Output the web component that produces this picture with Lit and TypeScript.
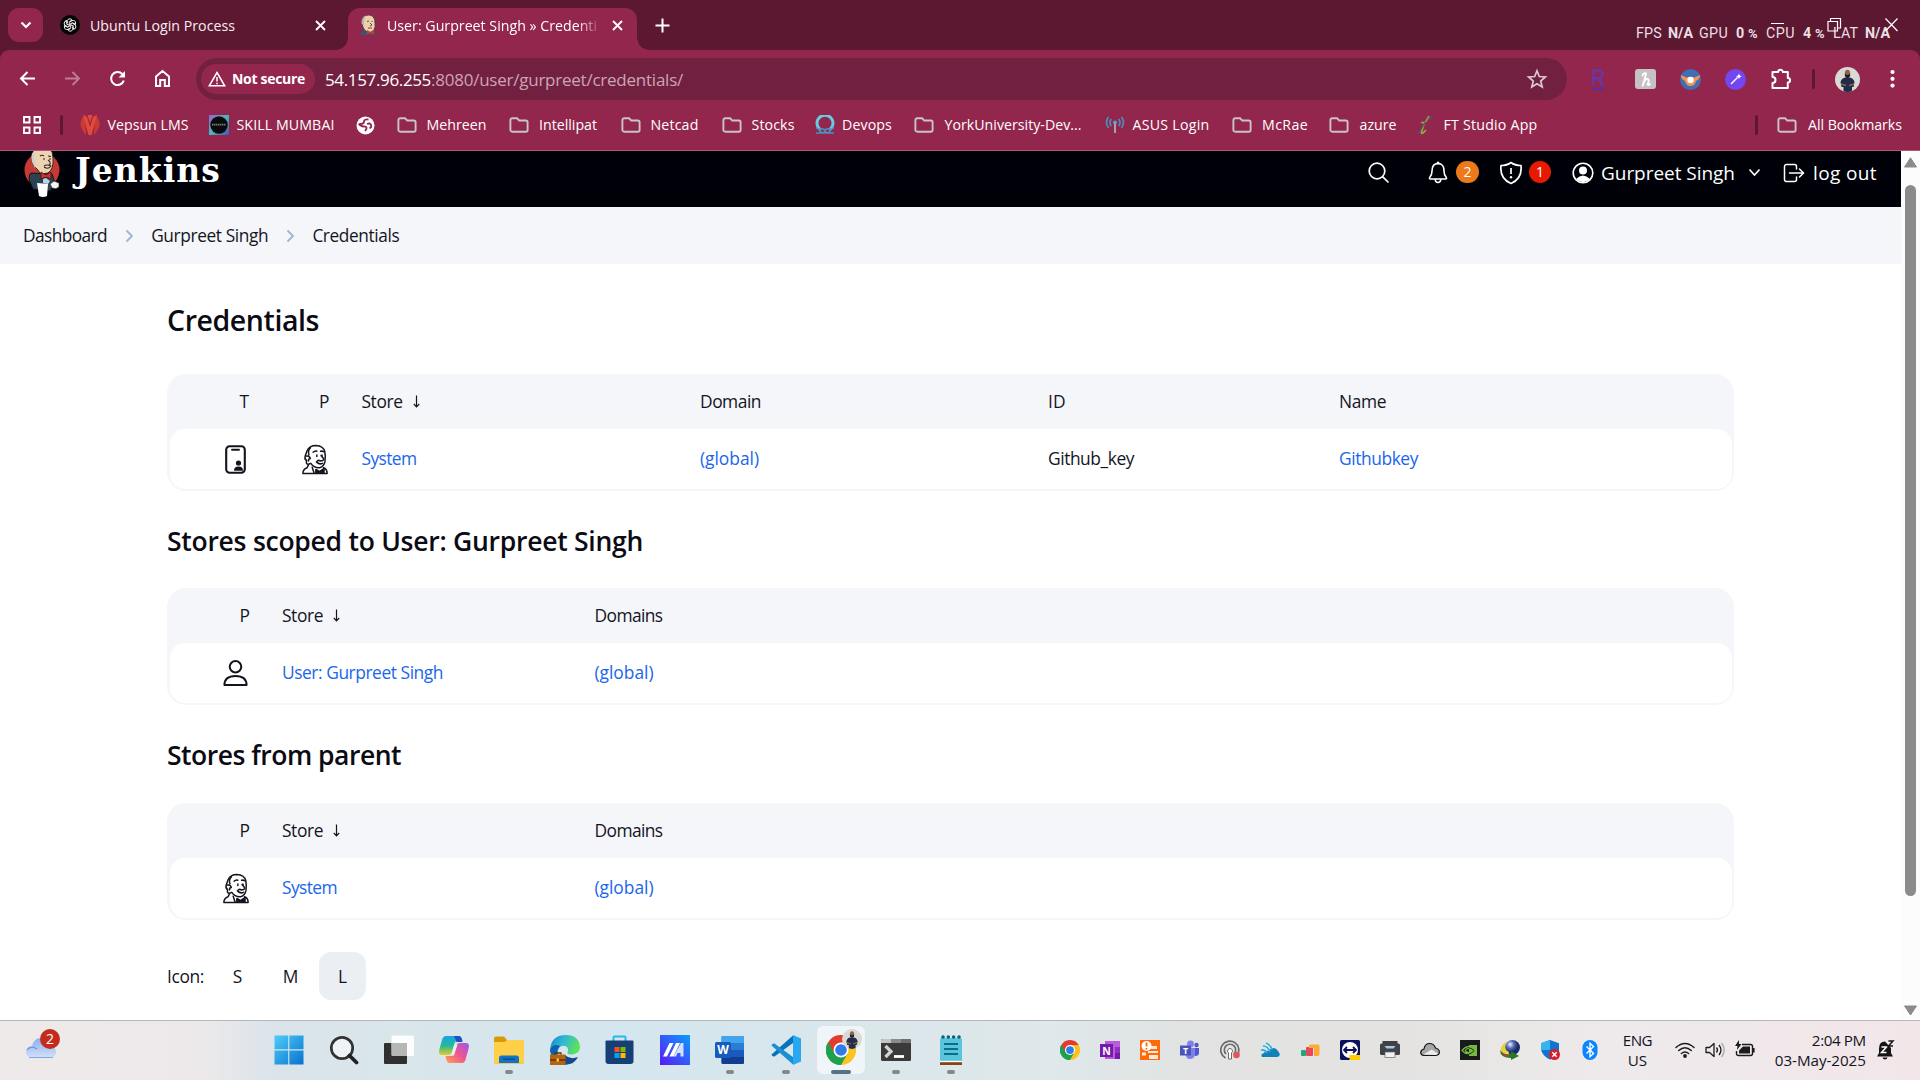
import { LitElement, html, css, svg, nothing } from "lit";
import { customElement } from "lit/decorators.js";

/** Text whose tracking is tuned so that it fills a given width. */
const fit = (text: string, w: number, cls = "") =>
  html`<span class="fit ${cls}" data-w=${w}>${text}</span>`;

const icon = (w: number, h: number, body: unknown, cls = "") =>
  html`<svg class="ic ${cls}" width=${w} height=${h} viewBox="0 0 ${w} ${h}">${body}</svg>`;

const folder = icon(20, 16, svg`<path d="M3.2 1.2H8l2.2 2.3h6.600a1.800 1.800 0 0 1 1.800 1.800v7.600a1.800 1.800 0 0 1-1.800 1.800H3.200a1.800 1.800 0 0 1-1.800-1.800V3a1.800 1.800 0 0 1 1.800-1.800z" fill="none" stroke="#c9c5c7" stroke-width="1.900"/>`);

const vepsun = icon(20, 20, svg`<path d="M5 0Q-1 5 1 12q2 5 5 8z" fill="#c93c34"/><path d="M15 0q6 5 4 12-2 5-5 8z" fill="#c93c34"/><path d="M3 0l5.500 20h3L17 0l-4 2-3 10L7 2z" fill="#e5493a"/><path d="M7.500 0h5L10 8z" fill="#e5493a"/>`);
const skill = icon(20, 20, svg`<defs><linearGradient id="sk" x1="0" y1="0" x2="1" y2="1"><stop offset="0" stop-color="#9b62d0"/><stop offset=".5" stop-color="#48b9b9"/><stop offset="1" stop-color="#4653b5"/></linearGradient></defs><rect width="20" height="20" fill="url(#sk)"/><circle cx="10" cy="10" r="8.700" fill="#080a0c"/><path d="M3 9.600h14" stroke="#777" stroke-width="1.800" stroke-dasharray="1.500 .5"/>`);
const globe = icon(19, 19, svg`<circle cx="9.500" cy="9.500" r="9" fill="#fff"/><path d="M12.500 3.500Q8 3 8 5.500T4.500 8 7 10.500q3-.5 3.500 1T9 15M11 8q3-1.500 4 1t-1.500 3" fill="none" stroke="#93264d" stroke-width="1.900"/>`);
const devops = icon(20, 20, svg`<path d="M5 14.500A8 8 0 1 1 15 14.500" fill="none" stroke="#68cbe0" stroke-width="3"/><path d="M1 13q3 0 4 3t4 1-1-3-2 3M19 13q-3 0-4 3t-4 1 1-3 2 3M1 18h18" fill="none" stroke="#4c8fc0" stroke-width="1.500"/>`);
const asus = icon(20, 20, svg`<g fill="none" stroke="#4d8dbd" stroke-width="1.700"><path d="M3.500 2q-4 5.500 0 11M16.500 2q4 5.500 0 11M6.300 4q-2.600 3.500 0 7M13.700 4q2.600 3.500 0 7"/></g><circle cx="10" cy="7.500" r="2" fill="#57a2d6"/><path d="M10 9v9" stroke="#b9a8b4" stroke-width="1.800"/>`);
const ftStudio = icon(18, 20, svg`<path d="M5 7.500h3.500L5.500 17q-.5 2 1.500 1l3-3" fill="none" stroke="#8fae3c" stroke-width="1.700"/><path d="M17 2Q12 3 9.500 7L2 19" fill="none" stroke="#5a4a80" stroke-width="1.300"/><path d="M13 1L9.500 7" stroke="#8f9a3a" stroke-width="1.600"/>`);

const chrome = (s: number) => html`<svg class="ic" width=${s} height=${s} viewBox="0 0 48 48">
  <path d="M24 24L3.200 12A24 24 0 0 1 44.800 12z" fill="#e33b2e"/>
  <path d="M24 24L3.200 12A24 24 0 0 0 24 48l10.400-18z" fill="#1fa04e"/>
  <path d="M24 24L24 48A24 24 0 0 0 44.800 12H24z" fill="#fcc31e"/>
  <path d="M3.200 12L13.600 30 24 24V13H44.800z" fill="#e33b2e"/><path d="M3.200 12L13.600 30 24 35 34.400 30 24 48A24 24 0 0 1 3.200 12z" fill="#1fa04e"/>
  <circle cx="24" cy="24" r="12" fill="#fff"/><circle cx="24" cy="24" r="9.300" fill="#2f7bea"/></svg>`;

const person = (s: number) => html`<svg class="ic" width=${s} height=${s} viewBox="0 0 25 25">
  <defs><clipPath id="pc"><circle cx="12.500" cy="12.500" r="12.500"/></clipPath></defs>
  <g clip-path="url(#pc)"><rect width="25" height="25" fill="#d9dad3"/><path d="M5.500 15q1-4 5-4.500h4q4 .5 5 4.500l-1 5H17v5H8.500v-5H6.500z" fill="#222b48"/>
  <path d="M6 17l5 1.500M19 17l-5 1.500" stroke="#8a6350" stroke-width="1.600"/><ellipse cx="12.500" cy="6.500" rx="2.700" ry="3.700" fill="#8a6350"/><path d="M9.800 7q0 4 2.700 4t2.700-4l-2.700 1z" fill="#221b1b"/></g></svg>`;

const butler = html`<svg class="ic butler" width="28" height="31" viewBox="0 0 30 32" preserveAspectRatio="none" fill="none" stroke="#14141f" stroke-width="1.600" stroke-linecap="round" stroke-linejoin="round">
  <path d="M6 17Q3.500 16 4.500 12.500L6.500 7Q9 1.500 16 1.500q8 .3 9.500 6.500.9 4 .2 10-1 5.500-5.700 6.500-6 .5-9.500-4.500L8 21q-3 0-2-4z"/>
  <path d="M6 12.500q3-.5 4 2.500-2 0-2 2.500M10 4q-3 3-1.500 7M13 8.500q2-2 4-1M21 7.500q2-.5 3 .5"/><path d="M17 11.500v1.500M22.500 11.500v1.500M21.500 12q4 3.500 2 5l-3 .5q-2-1.500-4 1 3 3 6.500 1.500"/>
  <path d="M8 21.500l-1.500 3Q2 26 2 30.500h26q0-5-4-6M12 24l2 6M16 26.500l4 2 4.500-3v5l-4.500-2-4 2z"/><path d="M16 30v-4l4 2.500zM24.500 30v-4L20 28.500z" fill="#14141f" stroke-width="1"/></svg>`;

const idCard = html`<svg class="ic" width="21" height="29" viewBox="0 0 21 29"><rect x="1.200" y="1.200" width="18.600" height="26.600" rx="3.500" fill="none" stroke="#14141f" stroke-width="2.100"/><path d="M7 4.700h7" stroke="#14141f" stroke-width="1.900" stroke-linecap="round"/><circle cx="13.500" cy="18" r="2.600" fill="#14141f"/><path d="M9 25.700q0-4.200 4.500-4.200t4.500 4.200z" fill="#14141f"/></svg>`;
const userLine = html`<svg class="ic userLine" width="25" height="28" viewBox="0 0 26 28" fill="none" stroke="#14141f" stroke-width="2.100" stroke-linejoin="round"><circle cx="13" cy="7.500" r="6"/><path d="M1.500 26.500q0-9.500 11.500-9.500t11.500 9.500z"/></svg>`;
const sortArrow = html`<svg class="ic sort" width="9" height="13" viewBox="0 0 9 13"><path d="M4.500 .5v11M1.800 9l2.700 2.800L7.200 9" fill="none" stroke="#14141f" stroke-width="1.200"/></svg>`;

const bookmarks: [unknown, string, number, number, number][] = [
  // icon, label, label width, gap to label, full pitch
  [vepsun, "Vepsun LMS", 81, 7.500, 129], [skill, "SKILL MUMBAI", 98, 7.500, 146.500], [globe, "", 0, 0, 41],
  [folder, "Mehreen", 60, 10, 112], [folder, "Intellipat", 58, 10.500, 112], [folder, "Netcad", 48, 10, 101],
  [folder, "Stocks", 43, 10, 93.500], [devops, "Devops", 50, 7, 99], [folder, "YorkUniversity-Dev...", 137, 10.500, 191],
  [asus, "ASUS Login", 77, 7.500, 127], [folder, "McRae", 46, 10, 97], [folder, "azure", 37, 10.500, 87],
  [ftStudio, "FT Studio App", 94, 9.500, 200],
];

const taskIcons = [
  icon(30, 30, svg`<defs><linearGradient id="wn" x1="0" y1="0" x2="1" y2="1"><stop offset="0" stop-color="#50ccfa"/><stop offset="1" stop-color="#0573ce"/></linearGradient></defs><path d="M.5.500h13.700v13.700H.5zM15.300.500H29.500v13.700H15.300zM.5 15.500h13.700v14H.5zM15.300 15.500H29.500v14H15.300z" fill="url(#wn)"/>`),
  icon(30, 30, svg`<circle cx="13" cy="13" r="10.700" fill="#eef4f6" stroke="#333" stroke-width="2.700"/><path d="M20.500 20.500l7 7" stroke="#222" stroke-width="3.800" stroke-linecap="round"/>`),
  icon(30, 30, svg`<rect x="0" y="8" width="23" height="21" rx="1" fill="#303030"/><rect x="7.500" y=".500" width="22.500" height="20.500" rx="1" fill="#fff" opacity=".9"/><path d="M7.500 8H23v13H8z" fill="#b6b6b6"/>`),
  icon(30, 30, svg`<defs><linearGradient id="c1" x1="0" y1="0" x2="0" y2="1"><stop offset="0" stop-color="#18a5ec"/><stop offset=".5" stop-color="#24b798"/><stop offset="1" stop-color="#e7cb21"/></linearGradient><linearGradient id="c2" x1="1" y1="0" x2="0" y2="1"><stop offset="0" stop-color="#9c55ee"/><stop offset=".5" stop-color="#f2558d"/><stop offset="1" stop-color="#fba553"/></linearGradient></defs><path d="M7 1h13q2.500 0 3.500 5H18q-2 0-3 4l-2 7q-1 3-4 3H3Q-1 20 .5 14L3 5Q4 1 7 1z" fill="url(#c1)"/><path d="M15 1h5q2.500 0 3.500 6h-6z" fill="#204fc8"/><path d="M23 28H10q-2.500 0-3.500-7H12q2 0 3-4l2-6q1-3 4-3h6q4 0 2.500 6L27 23q-1 5-4 5z" fill="url(#c2)"/><path d="M15.500 9.500h3l-3.500 11h-3z" fill="#e3f2f3"/>`),
  icon(30, 30, svg`<path d="M0 3.500a2 2 0 0 1 2-2h8l3 3.500h15a2 2 0 0 1 2 2V27a1.500 1.500 0 0 1-1.500 1.500h-27A1.500 1.500 0 0 1 0 27z" fill="#d99b05"/><path d="M0 7h11l2-2h15a2 2 0 0 1 2 2v20a1.500 1.500 0 0 1-1.500 1.500h-27A1.500 1.500 0 0 1 0 27z" fill="#ffcf48"/><path d="M5 28v-5a2.500 2.500 0 0 1 2.500-2.500h15A2.500 2.500 0 0 1 25 23v5z" fill="#0f74c8"/><path d="M9 24.200h12" stroke="#094b8c" stroke-width="1.400"/>`),
  icon(30, 30, svg`<defs><linearGradient id="e1" x1="0" y1="0" x2="1" y2=".3"><stop offset="0" stop-color="#1583c7"/><stop offset=".5" stop-color="#2fb9d4"/><stop offset="1" stop-color="#5ce05e"/></linearGradient></defs><path d="M0 17Q0 0 16 0q13 0 14 12 0 7-8 7.500-5 0-4.500-2 1.500-2 0-5-3-3-7-1-3 2-3 8z" fill="url(#e1)"/><path d="M0 15q3-7 10-4-5 5-1 13 4 5 10 5Q3 33 0 15z" fill="#0c62b2"/><path d="M15 20q5 5 13 2-4 8-13 7.500z" fill="#14488d"/><rect x="0" y="19.500" width="15.500" height="10.500" fill="#b4640e"/><path d="M5 19.500V18h6v1.500M0 25h15.500" stroke="#5f300a" stroke-width="1.300" fill="none"/><rect x="6.500" y="23.500" width="2.500" height="3" fill="#ffc83d"/>`),
  icon(30, 30, svg`<path d="M8.500 7V2.500q0-1 1-1h10q1 0 1 1V7" fill="none" stroke="#2bb5ef" stroke-width="2"/><path d="M.5 6.500q0-1 1-1h26q1 0 1 1V26q0 3-3 3h-22q-3 0-3-3z" fill="#163f78"/><path d="M9.500 12h5v5h-5z" fill="#f25022"/><path d="M15.500 12h5v5h-5z" fill="#7fba00"/><path d="M9.500 18h5v5h-5z" fill="#00a4ef"/><path d="M15.500 18h5v5h-5z" fill="#ffb900"/>`),
  icon(30, 30, svg`<defs><linearGradient id="ma" x1="0" y1="1" x2="1" y2="0"><stop offset="0" stop-color="#5a18f5"/><stop offset="1" stop-color="#0a9dff"/></linearGradient></defs><rect width="30" height="30" fill="url(#ma)"/><path d="M3 21.500L9.500 8h4L7 21.500zM9.500 21.500L16 8h4l-6.500 13.500z" fill="#fff"/><path d="M21 8h2.500v13.500h-3V18h-3L16 21.500h-2.500z" fill="#d6dfff"/>`),
  icon(30, 30, svg`<rect x="6.500" y="1" width="22.500" height="28" rx="1.500" fill="#2b7cd3"/><path d="M6.500 1H29v7H6.500z" fill="#41a5ee"/><path d="M6.500 15H29v7H6.500z" fill="#185abd"/><path d="M6.500 22H29v5.500q0 1.500-1.500 1.500H8q-1.500 0-1.500-1.500z" fill="#103f91"/><rect x="0" y="7" width="16" height="16" rx="1.500" fill="#185abd"/><text x="8" y="19.300" class="glyph" font-size="12" text-anchor="middle">W</text>`),
  icon(30, 30, svg`<path d="M22 0v8L3.500 21.500Q1 22 .5 19.500L22 .500z" fill="#0873b8"/><path d="M22 30v-8L3.500 8.500Q1 8 .5 10.500L22 29.500z" fill="#1b8fd6"/><path d="M22 0l8 3.500v23L22 30z" fill="#2aa7f2"/>`),
  html`<span class="chromeTask">${chrome(30)}<span class="chromeUser">${person(20)}</span></span>`,
  icon(30, 30, svg`<rect y="4" width="30" height="22" rx="1.500" fill="#3a3a3a"/><path d="M0 8V5.500Q0 4 1.500 4H10v4z" fill="#c4c4c4"/><path d="M10 4h10v4H10z" fill="#8b8b8b"/><path d="M20 4h8.500Q30 4 30 5.500V8H20z" fill="#6f6f6f"/><path d="M4.500 11l5.500 5.500L4.500 22" fill="none" stroke="#d4d4d4" stroke-width="3.200"/><path d="M13 21.500h10" stroke="#fff" stroke-width="2.800"/>`),
  icon(30, 30, svg`<rect x="4" y="3" width="22" height="24" rx="1.500" fill="#58c5dc"/><path d="M4 27h22v3H4z" fill="#8c4310"/><path d="M4 26.500h22" stroke="#fff" stroke-width="1.400"/><path d="M8 9h14M8 14h14M8 19h14" stroke="#0b6c8c" stroke-width="1.900"/><g fill="#0b617c"><circle cx="7" cy="2" r="1.800"/><circle cx="12.300" cy="2" r="1.800"/><circle cx="17.600" cy="2" r="1.800"/><circle cx="23" cy="2" r="1.800"/></g>`),
];
const running = new Set([4, 8, 9, 11, 12]);

const trayIcons = [
  chrome(20),
  icon(20, 20, svg`<path d="M5 1h15v18H5z" fill="#b95bdc"/><path d="M15 7h5v6h-5z" fill="#9232bb"/><path d="M15 13h5v6h-5z" fill="#7719aa"/><rect y="4" width="13" height="13" fill="#7719aa"/><text x="6.500" y="14.500" class="glyph" font-size="10.500" text-anchor="middle">N</text>`),
  icon(20, 20, svg`<rect width="20" height="20" fill="#ff6a0a"/><circle cx="6.500" cy="6" r="5" fill="#fff"/><path d="M6.500 2.500v4M6.500 8v1.500" stroke="#ff6a0a" stroke-width="1.800"/><path d="M11 6h6v3h-6zM8 11h10v2H8zM9 15h9v4H9zM2 12.500h4v3H2z" fill="#ffe9d8"/>`),
  icon(20, 20, svg`<circle cx="10.500" cy="4" r="3.400" fill="#7b83eb"/><circle cx="16.500" cy="5" r="2.200" fill="#5059c9"/><path d="M13 8h6v5q0 3-4 3z" fill="#5059c9"/><path d="M6 8h9v7q-1 4-5 4t-4-4z" fill="#7b83eb"/><rect y="5.500" width="11" height="10" fill="#4b53bc"/><text x="5.500" y="14" class="glyph" font-size="9" text-anchor="middle">T</text>`),
  icon(20, 20, svg`<g fill="none" stroke="#6a6a6a" stroke-width="1.700"><path d="M5.500 18A9 9 0 1 1 17 15.500"/><path d="M6 14a5.700 5.700 0 1 1 8 0"/></g><path d="M8.500 19v-6a2.500 2.500 0 1 1 3 0v6z" fill="#fff" stroke="#6a6a6a"/><circle cx="16.500" cy="15" r="3.300" fill="#e0575b"/>`),
  icon(20, 20, svg`<path d="M2 17q-2-3 2-4 1-3 4.500-2Q14 5 18 11q4 5-1 6z" fill="#1181b8"/><path d="M1 10q4-1 6 3M3 6q5 0 7 6M6 3q5 2 6 7" fill="none" stroke="#2ab0e0" stroke-width="1.700"/>`),
  icon(20, 20, svg`<rect x="1" y="10" width="5" height="6" rx="1" fill="#1fa97a"/><rect x="6" y="7" width="7" height="9" rx="1" fill="#e8465d"/><path d="M9 6q0-1.500 1.500-1.500H18q1.500 0 1.500 1.500v8q0 2-2 2H14V8H9z" fill="#fbab34"/>`),
  icon(20, 20, svg`<rect width="20" height="20" rx="1.500" fill="#0b1259"/><circle cx="10" cy="10" r="8" fill="#fff"/><path d="M4 10h12M7 7l-3 3 3 3M13 7l3 3-3 3" fill="none" stroke="#0b1259" stroke-width="1.800"/><rect x="9.500" y="15" width="10.500" height="5" fill="#ffcc00"/>`),
  icon(20, 20, svg`<path d="M2.500 1h15v4h-15z" fill="#3d3f47"/><rect y="3.500" width="20" height="11.500" rx="1.500" fill="#40424a"/><path d="M4.500 6h11l-2 2.500h-7z" fill="#a8c9e0"/><rect x="5" y="12" width="10" height="5.500" fill="#f2f2f2" stroke="#666" stroke-width=".7"/>`),
  icon(20, 20, svg`<path d="M4 15.500q-3.500-.5-3.300-3.300.5-2.700 3.300-3.200 1-5.500 5.500-5.500t6 4.500q3.800 1 3.900 4 0 3-3.400 3.500z" fill="#a7a7a7" stroke="#151515" stroke-width="1.200"/><path d="M3.500 14.500l8-5 6.500 4-2 1.500z" fill="#ececec"/>`),
  icon(20, 20, svg`<rect width="20" height="20" fill="#171b1b"/><path d="M9 5h8v11H9z" fill="#76b93f"/><path d="M2 10.500q5-6 10-2.500l2 2.500Q8 17 2 10.500zM5 10.500q3-4 6.500 0-3 4-6.500 0" fill="none" stroke="#76b93f" stroke-width="1.200"/><path d="M9 8q3 0 5 2.500-2 3-5 3.500" fill="none" stroke="#1c3517" stroke-width="1"/>`),
  icon(20, 20, svg`<defs><radialGradient id="id" cx=".35" cy=".3"><stop offset="0" stop-color="#eef3ff"/><stop offset=".5" stop-color="#5870b5"/><stop offset="1" stop-color="#1c2c68"/></radialGradient></defs><circle cx="12.500" cy="7.500" r="7.500" fill="url(#id)"/><path d="M7 1.500Q4 5 6 10q4 2 3 4Q-1 13 1 8 3 3 7 1.500z" fill="#e9d034"/><path d="M0 10q3 5 11 4v-3l8 5-8 4v-2Q0 18 0 10z" fill="#277a25"/><path d="M1 11q3 5 9 4l-2 2q-6-1-7-6z" fill="#cf3c22"/>`),
  icon(20, 20, svg`<path d="M10 0l9 3.300v6Q18 16 10 19.500 2 16 1 9.300v-6z" fill="#1474cd"/><path d="M10 0v10H1V3.300z" fill="#35b5ef"/><path d="M10 10h9q-1 6.500-9 9.500z" fill="#0d5cad"/><circle cx="14.500" cy="14.500" r="5.500" fill="#d51f2d"/><path d="M12.300 12.300l4.400 4.400M16.700 12.300l-4.400 4.400" stroke="#fff" stroke-width="1.400"/>`),
  icon(20, 20, svg`<rect x="2.500" width="15" height="20" rx="7.500" fill="#0a84ff"/><path d="M6.500 6.500l7 7L10 16.700V3.300l3.500 3.200-7 7" fill="none" stroke="#fff" stroke-width="1.400"/>`),
];

@customElement("app-root")
export class AppRoot extends LitElement {
  static styles = css`
    :host { display: block; width: 1920px; height: 1080px; overflow: hidden; font-family: "Open Sans", "Noto Sans", sans-serif; color: #14141f; background: #fff; }
    * { box-sizing: border-box; }
    svg.ic { display: block; flex: none; }
    .fit { white-space: pre; display: inline-block; flex: none; justify-self: start; }
    .glyph { font-family: "Open Sans", sans-serif; font-weight: 700; fill: #fff; }
    .screen { display: flex; flex-direction: column; width: 1920px; height: 1080px; }

    .tabs { height: 50px; background: #5c1830; display: flex; padding-left: 8px; color: #fff; font-size: 14.200px; position: relative; flex: none; }
    .tabSearch { width: 35px; height: 34px; margin-top: 8px; border-radius: 11px; background: #93264d; display: grid; place-items: center; }
    .tab { height: 42px; margin-top: 8px; padding-bottom: 8px; display: flex; align-items: center; }
    .tab.idle { width: 305px; padding-left: 17px; }
    .tab.idle .label { width: 235px; padding-left: 10px; color: #f6edf1; }
    .tab.active { width: 289px; padding-left: 10px; background: #93264d; border-radius: 12px 12px 0 0; position: relative; }
    .tab.active::before, .tab.active::after { content: ""; position: absolute; bottom: 0; width: 12px; height: 12px; }
    .tab.active::before { left: -12px; background: radial-gradient(circle at 0 0, transparent 11.500px, #93264d 12px); }
    .tab.active::after { right: -12px; background: radial-gradient(circle at 100% 0, transparent 11.500px, #93264d 12px); }
    .tab.active .label { width: 213px; margin-left: 9px; white-space: nowrap; -webkit-mask-image: linear-gradient(90deg, #000 190px, rgba(0, 0, 0, .12) 212px); }
    .close { margin-left: 12px; }
    .newTab { margin: 18px 0 0 18px; }
    .monitor { position: absolute; left: 1636px; top: 23px; height: 20px; font: 14.300px Roboto, sans-serif; color: #e9dfe4; display: flex; align-items: center; }
    .monitor b { font-weight: 700; }
    .monitor > * { display: block; flex: none; }
    .m1 { width: 32px; } .m2 { width: 31px; } .m3 { width: 37px; } .m4 { width: 12px; } .m5 { width: 18px; }
    .monitor .pct { font-size: 13px; font-weight: 700; padding-top: 1px; }
    .winctl { position: absolute; left: 1770px; top: 17px; }

    .under { background: #5c1830; flex: none; }
    .chromeBar { height: 101px; background: #93264d; color: #fff; border-radius: 9px 9px 0 0; border-bottom: 1px solid #ab5879; }
    .tools { height: 50px; display: flex; padding: 8px 0 0 17px; }
    .tools > .nav { width: 45px; height: 42px; display: flex; align-items: center; flex: none; }
    .omni { width: 1371px; height: 42px; border-radius: 21px; background: #722040; margin-left: -1px; display: flex; align-items: center; padding-left: 5px; flex: none; }
    .chip { width: 114px; height: 30px; border-radius: 15px; background: #93264d; display: flex; align-items: center; padding-left: 7px; gap: 6px; font-size: 14px; font-weight: 700; flex: none; }
    .chip .fit { margin-top: -1px; }
    .url { width: 1211px; padding-left: 10px; font-size: 17px; color: #cda4b6; flex: none; }
    .url .host { color: #fff; }
    .exts { display: flex; height: 42px; align-items: center; padding-left: 20px; flex: none; }
    .exts > span { width: 45px; display: flex; justify-content: center; flex: none; }
    .exts > .rak { width: 23px; margin-right: 13px; }
    .exts > .sep { width: 3px; margin: 0 20px 0 9px; }
    .exts > .me { width: 25px; }
    .exts > .more { width: 60px; padding-left: 4px; }
    .bms { height: 50px; display: flex; align-items: center; padding-left: 23px; font-size: 14.200px; }
    .bms .fit { margin-top: -2px; }
    .sep { width: 3px; height: 20px; border-radius: 2px; background: #5c1830; flex: none; }
    .bms .sep.first { margin: 0 17px 0 19px; }
    .bm { display: flex; align-items: center; height: 30px; flex: none; }
    .bms .all { display: flex; align-items: center; gap: 11px; margin-left: auto; padding-right: 18px; }
    .all .sep { margin-right: 8px; }

    .view { display: flex; height: 869px; flex: none; }
    .page { width: 1901px; background: #fff; overflow: hidden; }
    .scroll { width: 19px; background: #fcfcfc; display: flex; flex-direction: column; align-items: center; padding-top: 6px; }
    .thumb { width: 11px; height: 711px; border-radius: 6px; background: #8b8b8b; margin: 17px 0 109px; }
    .jhead { height: 56px; background: #000009; color: #fff; display: flex; font-size: 19px; padding-left: 23px; }
    .brand { width: 1344px; display: flex; }
    .word { font: bold 33px/40px "DejaVu Serif", serif; margin: 0 0 0 14px; height: 40px; }
    .acts { display: flex; align-items: center; height: 43px; }
    .acts .badge { width: 23px; height: 22px; border-radius: 11px; background: #ec7a1a; color: #fff; font-size: 14px; line-height: 22px; text-align: center; margin: -1px 20px 0 8px; }
    .acts .badge.red { background: #e61a00; margin: -1px 21px 0 6px; width: 22px; }
    .acts .who { margin: 1px 13px 0 7px; }
    .acts .out { margin: 1px 0 0 8px; }
    .acts .space { width: 22px; }
    .crumbs { height: 57px; background: #f5f6f9; display: flex; align-items: center; padding-left: 23px; font-size: 17.300px; }
    .crumbs svg { margin: 0 17.600px; }
    .content { padding: 0 167px; font-size: 17.400px; }
    h1, h2 { margin: 0; font-weight: 600; display: flex; align-items: center; color: #0b0b14; }
    h1 { font-size: 28.500px; height: 110px; padding-top: 2px; }
    h2 { font-size: 26.500px; height: 97px; padding-top: 2px; }
    h2.last { height: 98px; }
    .table { width: 1567px; background: #f5f6fa; border-radius: 19px; padding: 0 2.500px 2.500px; height: 117px; }
    .tr { display: grid; align-items: center; padding-left: 55px; }
    .table.three .tr { grid-template-columns: 57.500px 312.500px 1fr; }
    .table.five .tr { grid-template-columns: 79.500px 57.500px 338.500px 348px 291px 1fr; }
    .head { height: 55px; padding-bottom: 1px; }
    .head .c { padding-left: 15px; }
    .body { height: 60px; background: #fff; border-radius: 15px; }
    .body > .fit { margin-top: -2px; }
    .butler { margin-left: -3px; }
    .userLine { margin-left: -2px; }
    .link { color: #1a66ec; }
    .store { display: flex; align-items: center; gap: 9px; }
    .sizes { display: flex; align-items: center; height: 48px; margin-top: 32px; }
    .sizes .fit { width: 44px; padding-bottom: 1px; }
    .sizes .sz { width: 53px; text-align: center; padding-bottom: 1px; }
    .sizes .pick { width: 47px; height: 48px; border-radius: 12px; background: #ebeff4; display: grid; place-items: center; margin-left: 2px; padding-bottom: 1px; }

    .bar { height: 60px; flex: none; border-top: 1px solid #b3b8ba; display: flex; background: linear-gradient(90deg, #efeaea 0, #ede9ea 200px, #dae4ea 275px, #d9e6ea 400px, #d4e6ef 620px, #dae7eb 850px, #dfe8eb 1050px, #e2e3e2 1200px, #e5e3e2 1400px, #eeeaeb 1600px, #f2e6e9 1920px); }
    .weather { width: 261px; padding: 17px 0 0 26px; position: relative; flex: none; }
    .wbadge { position: absolute; left: 40px; top: 8px; width: 20px; height: 20px; border-radius: 50%; background: #c42b1c; color: #fff; font-size: 14px; line-height: 20px; text-align: center; }
    .task { width: 48px; height: 48px; margin: 5px 3.620px 0; border-radius: 6px; display: flex; flex-direction: column; align-items: center; padding-top: 9px; flex: none; }
    .task.on { background: #eff5f8; box-shadow: 0 0 0 1px #dbe5e9; }
    .dot { width: 8px; height: 4px; border-radius: 2px; background: #858889; margin-top: 5px; }
    .on .dot { width: 20px; background: #587181; }
    .chromeTask { position: relative; display: block; }
    .chromeUser { position: absolute; left: 16px; top: -6px; }
    .tray { display: flex; gap: 20px; padding: 19px 0 0 81px; }
    .lang, .clock { font-size: 15.200px; line-height: 20px; display: flex; flex-direction: column; padding-top: 9px; }
    .lang { align-items: center; width: 31px; margin-left: 22px; }
    .sys { display: flex; gap: 10px; padding: 19px 0 0 22px; }
    .clock { align-items: flex-end; width: 92px; margin-left: 19px; }
    .bell { padding: 18px 0 0 11px; }
  `;

  /** Spread the characters of each measured label over its target width. */
  firstUpdated() {
    this.renderRoot.querySelectorAll<HTMLElement>(".fit[data-w]").forEach((el) => {
      const target = Number(el.dataset.w);
      const n = (el.textContent ?? "").length;
      const range = document.createRange();
      range.selectNodeContents(el);
      const natural = range.getBoundingClientRect().width;
      if (!target || !n || !natural) return;
      el.style.letterSpacing = `${(target - natural) / n}px`;
    });
  }

  private tabs() {
    const x = (cls: string) => icon(11, 11, svg`<path d="M1 1l9 9M10 1l-9 9" stroke="#fff" stroke-width="1.800"/>`, cls);
    return html`<div class="tabs">
      <div class="tabSearch">${icon(12, 8, svg`<path d="M1.500 1.500L6 6l4.500-4.500" fill="none" stroke="#fff" stroke-width="2.200"/>`)}</div>
      <div class="tab idle">${icon(20, 20, svg`<circle cx="10" cy="10" r="10" fill="#050505"/><g fill="none" stroke="#fff" stroke-width=".9">${[0, 60, 120, 180, 240, 300].map((a) => svg`<path transform="rotate(${a} 10 10)" d="M7.300 8.400V5.600Q8 3.600 10 3.800q1.300.1 2 1.200L9.300 6.700V10"/>`)}</g>`)}
        <span class="label">${fit("Ubuntu Login Process", 145)}</span>${x("")}</div>
      <div class="tab active">${icon(20, 20, svg`<path d="M5 15h11l2 5H2z" fill="#35586e"/><path d="M4 8Q4 0 10.500 0T17 8q1 8-5 9.500Q5 17 4 8z" fill="#ecd0ae" stroke="#4a3b38" stroke-width=".9"/><path d="M3.500 9Q3 2 8 .5L6 5v5z" fill="#b9b2ac"/><path d="M9 6.500l2-.5M14 6v1M12 8l2 2-2 1M10 13h4" stroke="#5b3d35" stroke-width=".9" fill="none"/><path d="M9 15l3.500 2 3.500-2v4.500l-3.500-1.500L9 19.500z" fill="#d33833"/>`)}
        <span class="label">${fit("User: Gurpreet Singh » Credenti", 210)}</span>${x("close")}</div>
      ${icon(15, 15, svg`<path d="M7.500 .5v14M.500 7.500h14" stroke="#fff" stroke-width="2"/>`, "newTab")}
      <div class="monitor"><span class="m1">${fit("FPS", 26)}</span><b class="m2">${fit("N/A", 25)}</b><span class="m3">${fit("GPU", 29)}</span><b class="m4">0</b><b class="m5 pct">%</b><span class="m3">${fit("CPU", 29)}</span><b class="m4">4</b><b class="m5 pct">%</b><span class="m1">${fit("LAT", 25)}</span><b>${fit("N/A", 25)}</b></div>
      ${icon(130, 16, svg`<path d="M1 6.500h13M58 4.500h9.500v9.500H58zM60.500 4V1.500h10V11H68M115.500 1.500l12 12.500M127.500 1.500l-12 12.500" fill="none" stroke="#fff" stroke-width="1.200"/>`, "winctl")}
    </div>`;
  }

  private toolbar() {
    return html`<div class="under"><div class="chromeBar">
      <div class="tools">
        <span class="nav">${icon(20, 20, svg`<path d="M18 9.500H4M10.500 3L4 9.500l6.500 6.500" fill="none" stroke="#fff" stroke-width="2"/>`)}</span>
        <span class="nav">${icon(20, 20, svg`<path d="M3 9.500h14M10.500 3L17 9.500 10.500 16" fill="none" stroke="#bd7c94" stroke-width="1.900"/>`)}</span>
        <span class="nav">${icon(20, 20, svg`<path d="M16.800 11.500a6.500 6.500 0 1 1-1.500-6.500l1.700 2" fill="none" stroke="#fff" stroke-width="2"/><path d="M18 2v6.500h-6.500z" fill="#fff"/>`)}</span>
        <span class="nav">${icon(20, 20, svg`<path d="M4 17V7.500L10.500 2 17 7.500V17h-4.200v-6H8.200v6z" fill="none" stroke="#fff" stroke-width="2"/>`)}</span>
        <div class="omni"><span class="chip">${icon(18, 16, svg`<path d="M9 1.500l7.700 13.300H1.300z" fill="none" stroke="#fff" stroke-width="1.500"/><path d="M9 6v4.500M9 11.800v1.500" stroke="#fff" stroke-width="1.500"/>`)}${fit("Not secure", 73)}</span>
          <span class="url">${fit("54.157.96.255", 106, "host")}${fit(":8080/user/gurpreet/credentials/", 252)}</span>
          ${icon(22, 22, svg`<path d="M11 2.800l2.300 5.700 6.100.5-4.700 4 1.500 6-5.200-3.300L5.800 19l1.500-6-4.700-4 6.100-.5z" fill="none" stroke="#dcc8d1" stroke-width="1.700"/>`)}</div>
        <div class="exts">
          <span class="rak">${icon(20, 24, svg`<path d="M4.500 18.500v-15H9.500a3.900 3.900 0 0 1 0 7.800H5M9.500 11.500l4.500 7" fill="none" stroke="#6a35a6" stroke-width="2.600"/><path d="M2.500 20.800h14l-2.500 2.200H5z" fill="#5131aa"/>`)}</span>
          <span>${icon(21, 20, svg`<rect width="21" height="20" rx="3" fill="#c6c2c3"/><path d="M7.800 16.500Q10 10 11 4.500q-2.500-1-3.500 2M8.500 13.500q3-4.500 4.500-3.500t-.5 5.500q1 1.500 2.500-.5" fill="none" stroke="#fff" stroke-width="1.900" stroke-linecap="round"/>`)}</span>
          <span>${icon(21, 21, svg`<circle cx="10.500" cy="10.500" r="10.500" fill="#3e6fb2"/><path d="M.8 6l6 2.500q3.500-1.500 7.400 0L20.300 6q-.5 4-4.300 6-1 5-5.500 5T5 12Q1 10 .8 6z" fill="#ef9357"/><circle cx="10.500" cy="11" r="3.200" fill="#fff"/>`)}</span>
          <span>${icon(21, 21, svg`<circle cx="10.500" cy="10.500" r="10.500" fill="#7346f0"/><path d="M6 15l6.500-6.500" stroke="#fff" stroke-width="1.500"/><path d="M14 4.500l.8 2 2 .8-2 1-.8 2-1-2-2-.9 2-.9z" fill="#fff"/>`)}</span>
          <span>${icon(22, 22, svg`<path d="M2.500 4h5.700a2.300 2.300 0 0 1 4.600 0h5v6a2 2 0 0 1 0 4.500V20H2.500v-5a3 3 0 0 0 0-6z" fill="none" stroke="#fff" stroke-width="2" stroke-linejoin="round"/>`)}</span>
          <span class="sep"></span>
          <span class="me">${person(25)}</span>
          <span class="more">${icon(5, 20, svg`<g fill="#fff"><circle cx="2.500" cy="3" r="2.100"/><circle cx="2.500" cy="9.800" r="2.100"/><circle cx="2.500" cy="16.600" r="2.100"/></g>`)}</span>
        </div>
      </div>
      <div class="bms">
        ${icon(18, 18, svg`<path d="M1 1h5.500v5.500H1zM11.500 1H17v5.500h-5.500zM1 11.500h5.500V17H1zM11.500 11.500H17V17h-5.500z" fill="none" stroke="#fff" stroke-width="1.900"/>`)}
        <span class="sep first"></span>
        ${bookmarks.map(([i, label, w, gap, pitch]) => html`<span class="bm" style="width:${pitch}px;gap:${gap}px">${i}${label ? fit(label, w) : nothing}</span>`)}
        <span class="all"><span class="sep"></span>${folder}${fit("All Bookmarks", 94)}</span>
      </div>
    </div></div>`;
  }

  private header() {
    return html`<div class="jhead">
      <div class="brand">
        <svg class="ic" width="38" height="47" viewBox="0 0 38 47"><circle cx="19" cy="19" r="17.500" fill="#c73a33"/>
          <path d="M8 22q-2 1-2 6l4 10 17 2 5-8-3-9z" fill="#2c4254" stroke="#101418"/><path d="M9 10Q8-3 19-4t11 11q1 11-5 15l-7 1-4-5q-4-2-5-8z" fill="#edd3b1" stroke="#302925"/>
          <path d="M9 11Q7 2 12-1l-1 8 2 6-1 4z" fill="#d5cdc5"/><path d="M17 5q2-1.500 4 0M25 5l3 .5M20 8h2M26 8h2M25 9q4 3 1 5M21 15q3-2 7 0-3 4-7 1" fill="none" stroke="#352824" stroke-width="1.100"/>
          <path d="M18 21l5 3 5-3v7l-5-2-5 2z" fill="#d62f2d" stroke="#3a1514" stroke-width=".7"/><path d="M20 28l3-1 4 3-2 3-5-1z" fill="#b9d3df"/>
          <path d="M14 32l11 1-1 12q-4 2-8 0z" fill="#fff"/><path d="M27 33l4-3 5 2v4q-3 3-7 1z" fill="#f3f3ef" stroke="#222" stroke-width=".7"/></svg>
        ${fit("Jenkins", 146, "word")}
      </div>
      <div class="acts">
        ${icon(61, 24, svg`<g fill="none" stroke="#fff" stroke-width="1.700" stroke-linecap="round"><circle cx="10" cy="10" r="7.800"/><path d="M15.800 15.800L21 21"/></g>`)}
        ${icon(20, 24, svg`<g fill="none" stroke="#fff" stroke-width="1.600" stroke-linejoin="round"><path d="M10 2.500q-6 0-6 7.500 0 4-2.300 6.500-.7 1.500.8 1.500h15q1.500 0 .8-1.500Q16 14 16 10q0-7.500-6-7.500zM7.200 18.500q.3 3 2.800 3t2.800-3"/></g><circle cx="10" cy="2" r="1.500" fill="#fff"/>`)}
        <span class="badge">2</span>
        ${icon(24, 24, svg`<path d="M12 1.500Q8 4.500 2 4.500q-1.500 13 10 18 11.500-5 10-18-6 0-10-3z" fill="none" stroke="#fff" stroke-width="1.700" stroke-linejoin="round"/><path d="M12 7v6" stroke="#fff" stroke-width="1.700"/><circle cx="12" cy="16.300" r="1.200" fill="#fff"/>`)}
        <span class="badge red">1</span>
        ${icon(22, 22, svg`<circle cx="11" cy="11" r="9.800" fill="none" stroke="#fff" stroke-width="1.600"/><circle cx="11" cy="8.500" r="4" fill="#fff"/><path d="M4 17q7-7 14 0-7 6.500-14 0z" fill="#fff"/>`)}
        <span class="who">${fit("Gurpreet Singh", 134)}</span>
        ${icon(13, 9, svg`<path d="M1.500 1.500l5 5.500 5-5.500" fill="none" stroke="#fff" stroke-width="1.600"/>`)}
        <span class="space"></span>
        ${icon(22, 20, svg`<path d="M13.500 6V3.500a2 2 0 0 0-2-2H3.500a2 2 0 0 0-2 2v13a2 2 0 0 0 2 2h8a2 2 0 0 0 2-2V14M6.500 10H20M16.500 6l4 4-4 4" fill="none" stroke="#fff" stroke-width="1.500" stroke-linecap="round"/>`)}
        <span class="out">${fit("log out", 64)}</span>
      </div>
    </div>`;
  }

  private storeTable(rowIcon: unknown, name: string, w: number) {
    return html`<div class="table three">
      <div class="tr head"><span class="c">${fit("P", 10)}</span><span class="store">${fit("Store", 41)}${sortArrow}</span>${fit("Domains", 68)}</div>
      <div class="tr body"><span>${rowIcon}</span>${fit(name, w, "link")}${fit("(global)", 59, "link")}</div>
    </div>`;
  }

  render() {
    const chev = icon(9, 14, svg`<path d="M1.500 1.500L7 7l-5.500 5.500" fill="none" stroke="#a3b1d2" stroke-width="1.800"/>`);
    return html`<div class="screen">
      ${this.tabs()}${this.toolbar()}
      <div class="view">
        <div class="page">
          ${this.header()}
          <div class="crumbs">${fit("Dashboard", 84)}${chev}${fit("Gurpreet Singh", 117)}${chev}${fit("Credentials", 87)}</div>
          <div class="content">
            <h1>${fit("Credentials", 152)}</h1>
            <div class="table five">
              <div class="tr head"><span class="c">${fit("T", 9)}</span><span class="c">${fit("P", 10)}</span><span class="store">${fit("Store", 41)}${sortArrow}</span>${fit("Domain", 61)}${fit("ID", 18)}${fit("Name", 47)}</div>
              <div class="tr body"><span>${idCard}</span><span>${butler}</span>${fit("System", 55, "link")}${fit("(global)", 59, "link")}${fit("Github_key", 86)}${fit("Githubkey", 79, "link")}</div>
            </div>
            <h2>${fit("Stores scoped to User: Gurpreet Singh", 476)}</h2>
            ${this.storeTable(userLine, "User: Gurpreet Singh", 161)}
            <h2 class="last">${fit("Stores from parent", 234)}</h2>
            ${this.storeTable(butler, "System", 55)}
            <div class="sizes">${fit("Icon:", 37)}<span class="sz">S</span><span class="sz">M</span><span class="pick">L</span></div>
          </div>
        </div>
        <div class="scroll">
          ${icon(13, 11, svg`<path d="M6.500 .8L12.500 10H.5z" fill="#8b8b8b" stroke="#8b8b8b" stroke-linejoin="round"/>`)}
          <div class="thumb"></div>
          ${icon(13, 11, svg`<path d="M6.500 10L12.500 1H.5z" fill="#8b8b8b" stroke="#8b8b8b" stroke-linejoin="round"/>`)}
        </div>
      </div>
      <div class="bar">
        <div class="weather">${icon(30, 21, svg`<defs><linearGradient id="cl" x1="0" y1="0" x2="0" y2="1"><stop offset="0" stop-color="#8aaeea"/><stop offset="1" stop-color="#d2e2fa"/></linearGradient></defs><path d="M6 20q-6-.5-6-6t6-6Q8 0 15 0t9 8q6 1 6 6 0 5.500-5 6z" fill="url(#cl)"/><path d="M1 12q4-5 10-1" fill="none" stroke="#6f93d9" stroke-width="1.200"/><path d="M3 19.500h24" stroke="#86a5e5" stroke-width="1"/>`)}<span class="wbadge">2</span></div>
        ${taskIcons.map((t, i) => html`<div class="task ${i === 10 ? "on" : ""}">${t}${i === 10 || running.has(i) ? html`<span class="dot"></span>` : nothing}</div>`)}
        <div class="tray">${trayIcons}</div>
        <div class="lang">${fit("ENG", 29)}${fit("US", 19)}</div>
        <div class="sys">
          ${icon(20, 20, svg`<g fill="none" stroke="#1c1c1c" stroke-width="1.500" stroke-linecap="round"><path d="M1 7.500q9-8 18 0M3.700 10.500q6.300-5.500 12.600 0M6.400 13.500q3.600-3 7.200 0"/></g><circle cx="10" cy="16" r="1.900" fill="#1c1c1c"/>`)}
          ${icon(20, 20, svg`<path d="M1 7.500h3.500L9 3.500v13L4.500 12.500H1z" fill="none" stroke="#1c1c1c" stroke-width="1.300" stroke-linejoin="round"/><path d="M11.500 7.500q2 2.500 0 5M14 5q4 5 0 10" fill="none" stroke="#1c1c1c" stroke-width="1.300"/><path d="M16.500 3q5.500 7 0 14" fill="none" stroke="#aaa" stroke-width="1.300"/>`)}
          ${icon(20, 20, svg`<path d="M7 4.500h8.500q2 0 2 2v7q0 2-2 2h-12q-2 0-2-2V11" fill="none" stroke="#1c1c1c" stroke-width="1.400"/><path d="M8 6.500h7v7H4v-3z" fill="#1c1c1c"/><path d="M18.500 8v4.500" stroke="#1c1c1c" stroke-width="2.200"/><path d="M4 0L0 6h2.500L2 10l4.500-6H4z" fill="#1c1c1c"/>`)}
        </div>
        <div class="clock">${fit("2:04 PM", 54)}${fit("03-May-2025", 91)}</div>
        <div class="bell">${icon(18, 22, svg`<path d="M8 2.500q-6 0-6 7V14l-2 3.500h16L14 14V9z" fill="#151515"/><path d="M5.500 18.500h5q-.5 2-2.500 2t-2.500-2z" fill="#151515"/><path d="M4.500 8h5l-5 5.500h5" fill="none" stroke="#fff" stroke-width="1.500"/><path d="M11.500 2h4.500l-4.500 5h4.500" fill="none" stroke="#151515" stroke-width="1.500"/>`)}</div>
      </div>
    </div>`;
  }
}
